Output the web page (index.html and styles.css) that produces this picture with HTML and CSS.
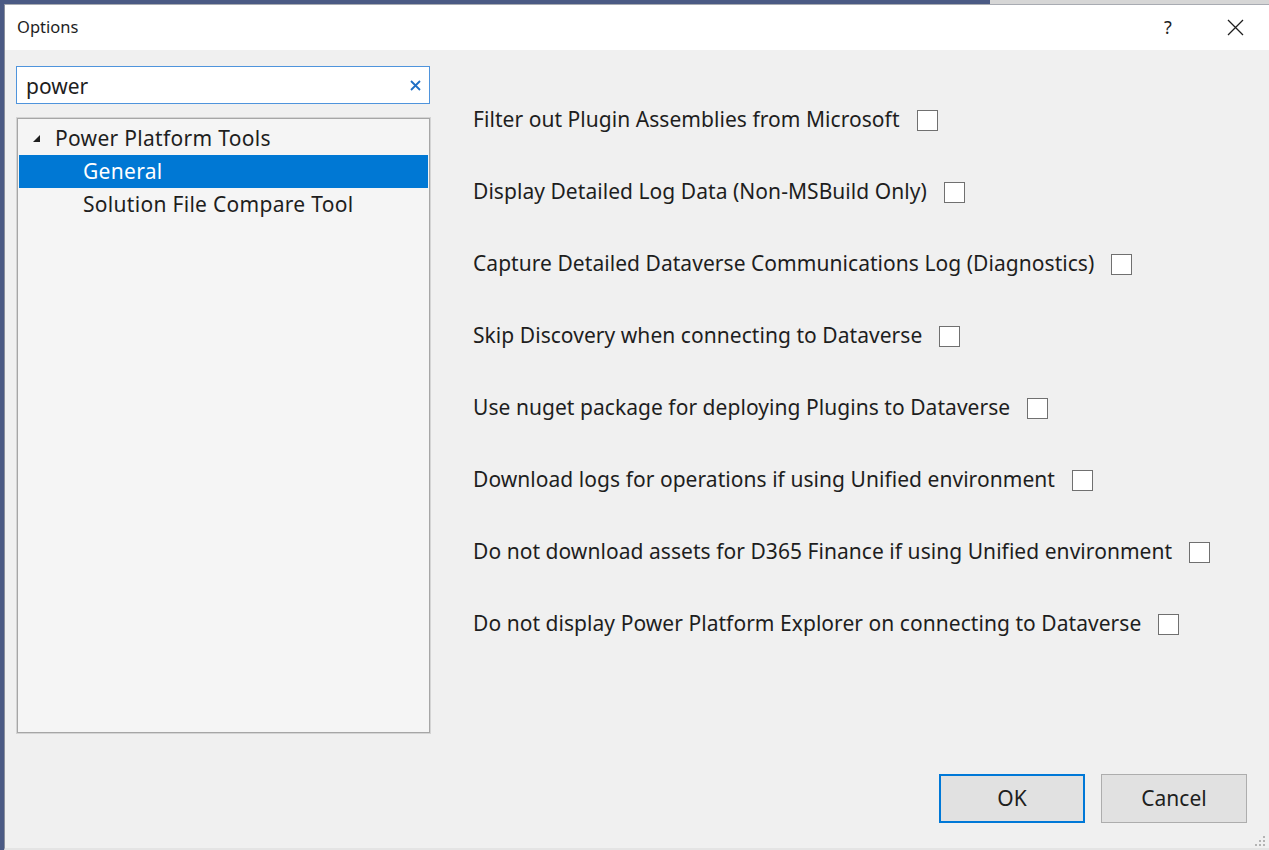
FILE: index.html
```html
<!DOCTYPE html>
<html lang="en">
<head>
<meta charset="utf-8">
<title>Options</title>
<link rel="stylesheet" href="styles.css">
</head>
<body>
<div class="screen">
  <div class="topstrip"></div>
  <div class="main">
    <div class="leftstrip"></div>
    <div class="window">
      <div class="titlebar">
        <span class="title">Options</span>
        <div class="title-actions">
          <span class="help">?</span>
          <span class="close">
            <svg width="17" height="17" viewBox="0 0 17 17"><path d="M1 1 L16 16 M16 1 L1 16" stroke="#1e1e1e" stroke-width="1.3" fill="none"/></svg>
          </span>
        </div>
      </div>
      <div class="content">
        <div class="panes">
          <div class="leftpane">
            <div class="search">
              <span class="search-text">power</span>
              <span class="search-clear">
                <svg width="11" height="11" viewBox="0 0 11 11"><path d="M1 1 L10 10 M10 1 L1 10" stroke="#1f6fc5" stroke-width="1.8" fill="none"/></svg>
              </span>
            </div>
            <div class="tree">
              <div class="tree-row root">
                <span class="expander"><svg width="8" height="8" viewBox="0 0 8 8"><polygon points="7,0 7,7 0,7" fill="#1e1e1e"/></svg></span>
                <span>Power Platform Tools</span>
              </div>
              <div class="tree-row child selected"><span>General</span></div>
              <div class="tree-row child"><span>Solution File Compare Tool</span></div>
            </div>
          </div>
          <div class="rightpane">
            <div class="option"><span>Filter out Plugin Assemblies from Microsoft</span><span class="check"></span></div>
            <div class="option"><span>Display Detailed Log Data (Non-MSBuild Only)</span><span class="check"></span></div>
            <div class="option"><span>Capture Detailed Dataverse Communications Log (Diagnostics)</span><span class="check"></span></div>
            <div class="option"><span>Skip Discovery when connecting to Dataverse</span><span class="check"></span></div>
            <div class="option"><span>Use nuget package for deploying Plugins to Dataverse</span><span class="check"></span></div>
            <div class="option"><span>Download logs for operations if using Unified environment</span><span class="check"></span></div>
            <div class="option"><span>Do not download assets for D365 Finance if using Unified environment</span><span class="check"></span></div>
            <div class="option"><span>Do not display Power Platform Explorer on connecting to Dataverse</span><span class="check"></span></div>
          </div>
        </div>
        <div class="buttons">
          <button class="btn btn-default">OK</button>
          <button class="btn">Cancel</button>
        </div>
        <div class="grip">
          <svg width="12" height="12" viewBox="0 0 12 12" fill="#b4b4b4">
            <rect x="9" y="1" width="2" height="2"/>
            <rect x="5" y="5" width="2" height="2"/><rect x="9" y="5" width="2" height="2"/>
            <rect x="1" y="9" width="2" height="2"/><rect x="5" y="9" width="2" height="2"/><rect x="9" y="9" width="2" height="2"/>
          </svg>
        </div>
      </div>
    </div>
  </div>
</div>
</body>
</html>
```
FILE: styles.css
```css
* { box-sizing: border-box; }
html, body { margin: 0; padding: 0; }
body {
  width: 1269px;
  height: 850px;
  overflow: hidden;
  font-family: "Noto Sans", "Open Sans", sans-serif;
  color: #1e1e1e;
  background: #4b5a84;
}
.screen { display: flex; flex-direction: column; height: 850px; }
.topstrip {
  height: 4px;
  flex: none;
  background: linear-gradient(to right, #4b5a84 990px, #d6d6d6 990px);
}
.main { flex: 1; display: flex; min-height: 0; }
.leftstrip { width: 4px; flex: none; background: #4b5a84; }
.window {
  flex: 1;
  display: flex;
  flex-direction: column;
  border-left: 1px solid #8a8f9c;
  border-top: 1px solid #a8abb2;
  border-bottom: 2px solid #e4e4e4;
  background: #f0f0f0;
}
.titlebar {
  height: 45px;
  flex: none;
  background: #ffffff;
  display: flex;
  align-items: center;
  justify-content: space-between;
  padding-left: 12px;
}
.title { font-size: 16.5px; padding-bottom: 2px; }
.title-actions { display: flex; align-items: center; height: 100%; }
.help {
  font-size: 18px;
  width: 68px;
  text-align: center;
  padding-bottom: 2px;
  padding-right: 10px;
}
.close {
  width: 62px;
  display: flex;
  justify-content: center;
  padding-right: 6px;
}
.content {
  flex: 1;
  position: relative;
  display: flex;
  flex-direction: column;
  padding: 16px 22px 0 11px;
}
.panes { display: flex; height: 667px; flex: none; }
.leftpane { width: 414px; flex: none; display: flex; flex-direction: column; }
.search {
  height: 38px;
  border: 1px solid #4f94dc;
  background: #ffffff;
  display: flex;
  align-items: center;
  justify-content: space-between;
  padding: 0 8px 0 9px;
  font-size: 21px;
}
.search-text { padding-top: 1px; }
.search-clear { display: flex; }
.tree {
  margin-top: 14px;
  margin-left: 1px;
  flex: 1;
  border: 1px solid #a6a6a6;
  box-shadow: 0 0 0 1px #d4d4d4;
  background: #f5f5f5;
  padding: 3px 1px;
  font-size: 21px;
  letter-spacing: 0.3px;
}
.tree-row {
  height: 33px;
  display: flex;
  align-items: center;
  padding-bottom: 2px;
}
.tree-row.root { padding-left: 14px; }
.expander { width: 22px; display: flex; align-items: center; padding-top: 2px; }
.tree-row.child { padding-left: 64px; }
.tree-row.selected { background: #0078d4; color: #ffffff; }
.rightpane {
  flex: 1;
  padding: 18px 0 0 43px;
  display: flex;
  flex-direction: column;
}
.option {
  height: 72px;
  display: flex;
  align-items: center;
  gap: 17px;
  font-size: 21px;
  letter-spacing: 0.05px;
}
.option span:first-child { padding-bottom: 3px; }
.check {
  width: 21px;
  height: 21px;
  flex: none;
  border: 1px solid #707070;
  background: #ffffff;
}
.buttons {
  margin-top: 41px;
  display: flex;
  justify-content: flex-end;
  gap: 16px;
}
.btn {
  width: 146px;
  height: 49px;
  font-family: inherit;
  font-size: 21px;
  color: #1e1e1e;
  background: #e1e1e1;
  border: 1px solid #adadad;
  padding: 0 0 2px;
}
.btn-default { border: 2px solid #0078d7; }
.grip { position: absolute; right: 3px; bottom: 1px; display: flex; }
```
